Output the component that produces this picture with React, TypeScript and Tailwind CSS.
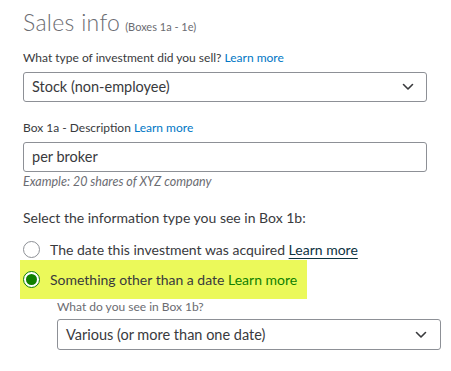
import React from "react";

const Chevron = () => (
  <svg width="12" height="8" viewBox="0 0 12 8" fill="none">
    <path d="M1.5 1.5L6 6L10.5 1.5" stroke="#393a3d" strokeWidth="1.6" strokeLinecap="round" strokeLinejoin="round" />
  </svg>
);

export default function App() {
  return (
    <div
      className="w-[451px] h-[371px] bg-white text-[#393a3d] pl-[23px] pt-[5px]"
      style={{ fontFamily: "Lato, 'Open Sans', sans-serif" }}
    >
      <div className="flex items-baseline h-[30px]">
        <span className="text-[23px] font-light text-[#6b6c72] tracking-[0.3px]">Sales info</span>
        <span className="text-[11px] text-[#6b6c72] ml-[5px]">(Boxes 1a - 1e)</span>
      </div>

      <div className="mt-[16px] text-[12px] leading-[14px] text-[#393a3d]">
        What type of investment did you sell? <span className="text-[#0077c5]">Learn more</span>
      </div>
      <div className="mt-[7px] w-[404px] h-[30px] border border-[#8d9096] rounded-[3px] flex items-center justify-between pl-[8px] pr-[12px]">
        <span className="text-[14.5px]">Stock (non-employee)</span>
        <Chevron />
      </div>

      <div className="mt-[19px] text-[12px] leading-[14px]">
        Box 1a - Description <span className="text-[#0077c5]">Learn more</span>
      </div>
      <div className="mt-[7px] w-[404px] h-[30px] border border-[#8d9096] rounded-[3px] flex items-center pl-[8px]">
        <span className="text-[14.5px]">per broker</span>
      </div>
      <div className="mt-[3px] text-[12.5px] italic text-[#6b6c72] leading-[14px]">Example: 20 shares of XYZ company</div>

      <div className="mt-[20px] text-[14px] leading-[18px]">Select the information type you see in Box 1b:</div>

      <div className="mt-[13px] flex items-center h-[18px]">
        <span className="w-[17px] h-[17px] rounded-full border border-[#8d9096] bg-white shrink-0" />
        <span className="ml-[10px] text-[14px]">
          The date this investment was acquired{" "}
          <span className="text-[#0d333f] underline underline-offset-[3px]">Learn more</span>
        </span>
      </div>

      <div className="mt-[2px] -ml-[3px] w-[287px] h-[39px] bg-[#ebf95a] flex items-center pl-[3px]">
        <span className="w-[17px] h-[17px] rounded-full border-[1.5px] border-[#108000] bg-white shrink-0 flex items-center justify-center">
          <span className="w-[11px] h-[11px] rounded-full bg-[#108000]" />
        </span>
        <span className="ml-[10px] text-[14px] text-[#393a3d]">
          Something other than a date <span className="text-[#108000]">Learn more</span>
        </span>
      </div>

      <div className="ml-[34px]">
        <div className="mt-[1px] text-[12px] leading-[14px] text-[#6b6c72]">What do you see in Box 1b?</div>
        <div className="mt-[5px] w-[384px] h-[31px] border border-[#8d9096] rounded-[3px] flex items-center justify-between pl-[8px] pr-[13px]">
          <span className="text-[14.5px]">Various (or more than one date)</span>
          <Chevron />
        </div>
      </div>
    </div>
  );
}
